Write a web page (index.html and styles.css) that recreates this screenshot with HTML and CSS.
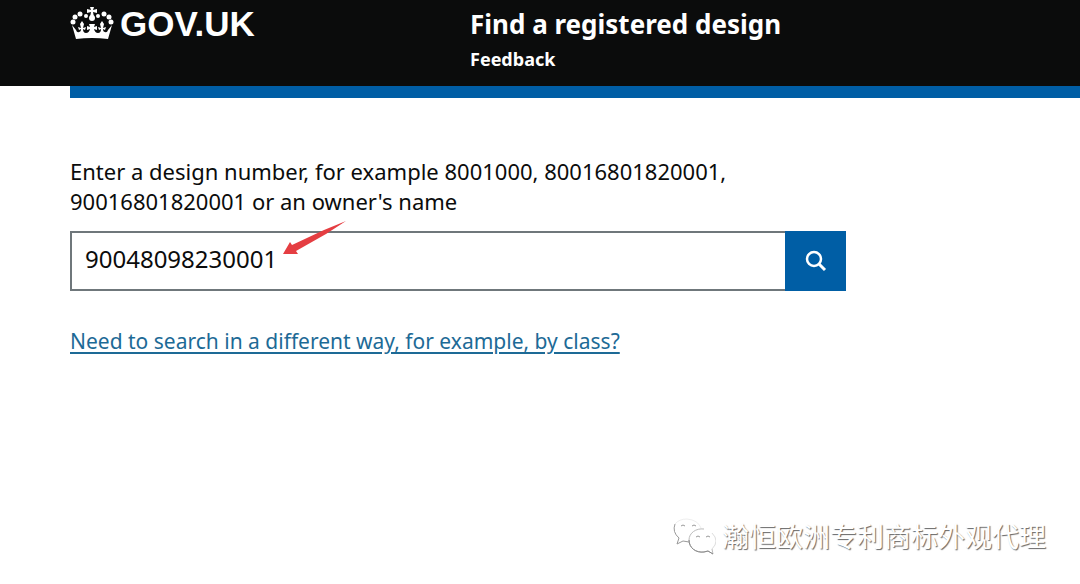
FILE: index.html
```
<!DOCTYPE html>
<html lang="en">
<head>
    <meta charset="UTF-8">
    <meta name="viewport" content="width=device-width, initial-scale=1.0">
    <title>Find a registered design - GOV.UK</title>
    <link rel="stylesheet" href="styles.css">
</head>
<body>
    <header class="header">
        <a href="#" class="logo">
            <svg class="crown" viewBox="0 0 44 36" fill="currentColor" aria-hidden="true">
                <path d="M20 1h4l-1 3 4-1v4l-4-1 1 5h-4l1-5-4 1V3l4 1z"/>
                <circle cx="22" cy="12" r="3"/>
                <circle cx="16" cy="10" r="2"/>
                <circle cx="10" cy="8" r="2.5"/>
                <circle cx="5" cy="11" r="2.5"/>
                <circle cx="3" cy="16" r="2.5"/>
                <circle cx="28" cy="10" r="2"/>
                <circle cx="34" cy="8" r="2.5"/>
                <circle cx="39" cy="11" r="2.5"/>
                <circle cx="41" cy="16" r="2.5"/>
                <path d="M2 19l4 5q1 3 3 2 2 0 2-3l-2 1-1-3 3 1-1-4 2-3 2 3-1 4 3-1-1 3-2-1q0 4 3 4 3 0 4-4l-3 1v-4l3 1-1-3h6l-1 3 3-1v4l-3-1q1 4 4 4 3 0 3-4l-2 1-1-3 3 1-1-4 2-3 2 3-1 4 3-1-1 3-2-1q0 3 2 3 2 1 3-2l4-5-4 14q-16-2-32 0z"/>
            </svg>
            <span class="logo-text">GOV.UK</span>
        </a>
        <div class="header-content">
            <a href="#" class="service-name">Find a registered design</a>
            <nav>
                <a href="#" class="nav-link">Feedback</a>
            </nav>
        </div>
    </header>
    <div class="header-bar"></div>

    <main class="main">
        <form class="search-form">
            <label for="search" class="label">Enter a design number, for example 8001000, 80016801820001, 90016801820001 or an owner's name</label>
            <div class="search-box">
                <input type="text" id="search" class="search-input" value="90048098230001">
                <button type="submit" class="search-button" aria-label="Search">
                    <svg class="search-icon" viewBox="0 0 22 22" fill="none" stroke="currentColor" aria-hidden="true">
                        <circle cx="9" cy="9" r="7" stroke-width="2.5"/>
                        <path d="m14 14 6 6" stroke-width="3"/>
                    </svg>
                </button>
                <svg class="arrow" viewBox="0 0 64 35" aria-hidden="true">
                    <path d="M63 0 43 13 13 30l2 3H0l7-12 2 3 32-15z" fill="#e53e42"/>
                </svg>
            </div>
        </form>
        <a href="#" class="more-link">Need to search in a different way, for example, by class?</a>
    </main>

    <div class="watermark">
        <svg class="chat-icon" viewBox="0 0 44 38" fill="none" stroke="#bbb" aria-hidden="true">
            <path d="M3 7q-3 8 4 14l-2 6 6-3 6 1" stroke="#999"/>
            <path d="M3 7q4-5 12-5 11 1 14 9" stroke="#eee"/>
            <path d="M32 12c-8-1-15 4-15 11 0 8 7 13 15 12l4-1 5 3-1-5"/>
            <path d="M17 23c0 8 7 13 15 12l4-1 5 3" stroke="#888"/>
            <path d="M40 32q8-8 0-16" stroke="#ddd"/>
            <path d="M9 9q2-2 4 0M20 9q2-2 4 0M24 20q2-2 4 0M34 20q2-2 4 0" stroke="#999"/>
        </svg>
        <span lang="zh">瀚恒欧洲专利商标外观代理</span>
    </div>
</body>
</html>
```
FILE: styles.css
```
* {
    box-sizing: border-box;
}
body {
    margin: 0;
    background: #fff;
    color: #0b0c0c;
    font-family: 'Noto Sans', Arial, sans-serif;
    font-size: 22px;
    line-height: 30px;
}
/* Header */
.header {
    display: flex;
    padding: 6px 0 10px 70px;
    background: #0b0c0c;
}
.header a {
    color: #fff;
    text-decoration: none;
    font-weight: 700;
}
.header-bar {
    height: 12px;
    margin-left: 70px;
    background: #005ea5;
}
.logo {
    display: flex;
    gap: 6px;
    width: 400px;
}
.crown {
    width: 44px;
    height: 36px;
}
.logo-text {
    font-family: 'Liberation Sans', Arial, sans-serif;
    font-size: 35px;
    line-height: 36px;
}
.service-name {
    display: block;
    font-size: 26px;
    line-height: 36px;
}
.nav-link {
    display: block;
    font-size: 18px;
    line-height: 34px;
}
/* Search */
.main {
    max-width: 846px;
    padding: 58px 0 0 70px;
}
.label {
    display: block;
    max-width: 700px;
    margin-bottom: 15px;
}
.search-box {
    display: flex;
    position: relative;
    height: 60px;
    margin-bottom: 34px;
}
.search-input {
    flex: 1;
    min-width: 0;
    padding: 0 13px 6px;
    border: 2px solid #6f777b;
    border-right: 0;
    border-radius: 0;
    color: #0b0c0c;
    font-family: inherit;
    font-size: 24px;
}
.search-button {
    display: flex;
    align-items: center;
    justify-content: center;
    width: 61px;
    border: 0;
    background: #005ea5;
    color: #fff;
    cursor: pointer;
}
.search-icon {
    width: 22px;
    height: 22px;
}
.arrow {
    position: absolute;
    left: 213px;
    top: -10px;
    width: 64px;
    height: 35px;
}
.more-link {
    color: #1d6a96;
    font-size: 21px;
    text-underline-offset: 3px;
}
/* Watermark */
.watermark {
    display: flex;
    align-items: center;
    gap: 6px;
    position: absolute;
    right: 34px;
    bottom: 28px;
    color: #fff;
    font-family: 'Noto Sans CJK SC', sans-serif;
    font-size: 27px;
    line-height: 40px;
    text-shadow: 1px 1px 1px #666;
}
.chat-icon {
    width: 44px;
    height: 38px;
}
```
